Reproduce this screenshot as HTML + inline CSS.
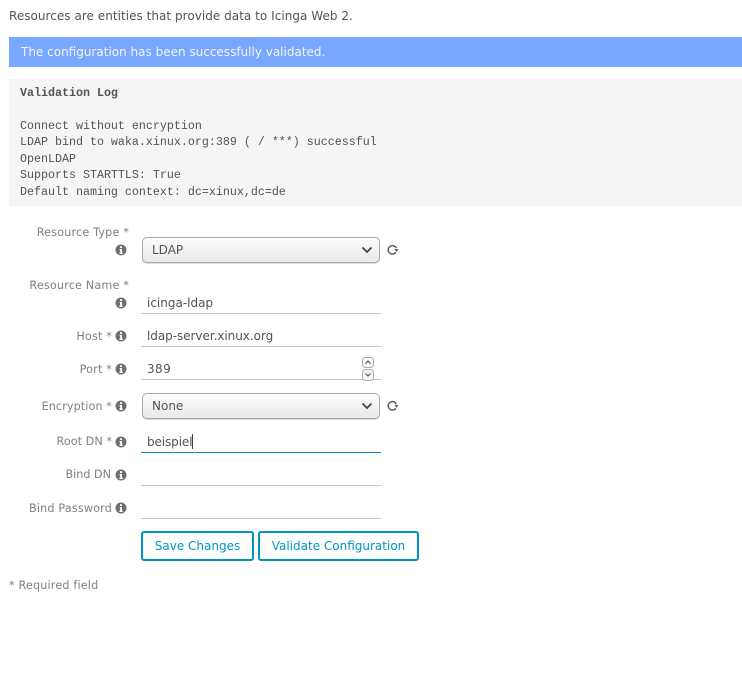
<!DOCTYPE html>
<html>
<head>
<meta charset="utf-8">
<style>
html,body{margin:0;padding:0;width:742px;height:694px;background:#fff;overflow:hidden}
body{position:relative;font-family:"DejaVu Sans",sans-serif;color:#535353}
.t{position:absolute;white-space:nowrap;line-height:16px}
.l{position:absolute;white-space:nowrap;line-height:14px;font-size:11.2px;color:#7f7f7f;letter-spacing:.17px;text-align:right}
.v{font-size:12px;color:#535353}
.b{position:absolute;left:141px;width:240px;height:1px;background:#c8c8c8}
.sel{position:absolute;left:142px;width:236px;height:24px;border:1px solid #aaa;border-radius:5px;background:linear-gradient(#fcfcfc,#e9e9e9);box-shadow:0 1px 0 #ddd}
.btn{position:absolute;top:531px;height:26px;border:2px solid #0095bf;border-radius:3px;color:#0095bf;font-size:12px;line-height:26px;text-align:center;background:#fff}
svg{position:absolute;display:block}
pre{margin:0;position:absolute;left:20px;font:11.67px/16.5px "Liberation Mono",monospace;color:#535353}
</style>
</head>
<body>
<div class="t" style="left:9px;top:8px;font-size:12px;letter-spacing:.035px">Resources are entities that provide data to Icinga Web 2.</div>
<div style="position:absolute;left:9px;top:37px;width:733px;height:30px;background:#77a7ff"></div>
<div class="t" style="left:21px;top:44px;font-size:12px;color:#f2f6ff">The configuration has been successfully validated.</div>
<div style="position:absolute;left:9px;top:79px;width:733px;height:127px;background:#f5f5f5"></div>
<pre style="top:84.5px"><b>Validation Log</b>

Connect without encryption
LDAP bind to waka.xinux.org:389 ( / ***) successful
OpenLDAP
Supports STARTTLS: True
Default naming context: dc=xinux,dc=de</pre>

<div class="l" style="right:613px;top:226px">Resource Type *</div>
<svg style="left:115px;top:244px" width="12" height="12" viewBox="0 0 12 12"><circle cx="6" cy="6" r="5.5" fill="#6f6f6f"/><path d="M5 2.3h2v1.7H5zM4.6 5h2.4v3.6h.7V10H4.4V8.6h.8V6.3h-.6z" fill="#fff"/></svg>
<div class="sel" style="top:237px"></div>
<div class="t v" style="left:152px;top:242px">LDAP</div>
<svg style="left:361px;top:246px" width="12" height="8" viewBox="0 0 12 8"><path d="M1.500 1.500L6 6l4.500-4.500" fill="none" stroke="#444" stroke-width="1.800"/></svg>
<svg style="left:386px;top:243px" width="13" height="13" viewBox="0 0 13 13"><path d="M9.800 9.300A4.200 4.200 0 1 1 10.300 5.200" fill="none" stroke="#555" stroke-width="1.400"/><path d="M8.300 6.100h4.300l-2.100 2.600z" fill="#555"/></svg>

<div class="l" style="right:613px;top:279px">Resource Name *</div>
<svg style="left:115px;top:297px" width="12" height="12" viewBox="0 0 12 12"><circle cx="6" cy="6" r="5.5" fill="#6f6f6f"/><path d="M5 2.3h2v1.7H5zM4.6 5h2.4v3.6h.7V10H4.4V8.6h.8V6.3h-.6z" fill="#fff"/></svg>
<div class="t v" style="left:147px;top:295px">icinga-ldap</div>
<div class="b" style="top:313px"></div>

<div class="l" style="right:630px;top:330px">Host *</div>
<svg style="left:115px;top:330px" width="12" height="12" viewBox="0 0 12 12"><circle cx="6" cy="6" r="5.5" fill="#6f6f6f"/><path d="M5 2.3h2v1.7H5zM4.6 5h2.4v3.6h.7V10H4.4V8.6h.8V6.3h-.6z" fill="#fff"/></svg>
<div class="t v" style="left:147px;top:328px;letter-spacing:-.05px">ldap-server.xinux.org</div>
<div class="b" style="top:346px"></div>

<div class="l" style="right:630px;top:363px">Port *</div>
<svg style="left:115px;top:363px" width="12" height="12" viewBox="0 0 12 12"><circle cx="6" cy="6" r="5.5" fill="#6f6f6f"/><path d="M5 2.3h2v1.7H5zM4.6 5h2.4v3.6h.7V10H4.4V8.6h.8V6.3h-.6z" fill="#fff"/></svg>
<div class="t v" style="left:147px;top:361px;letter-spacing:.4px">389</div>
<div class="b" style="top:379px"></div>
<svg style="left:361px;top:356px" width="14" height="26" viewBox="0 0 14 26"><rect x="1.500" y="1.500" width="11" height="10" rx="3" fill="#f8f8f8" stroke="#aaa"/><rect x="1.500" y="13.500" width="11" height="11" rx="3" fill="#f8f8f8" stroke="#aaa"/><path d="M4.500 7.500L7 5l2.500 2.500M4.500 17.500L7 20l2.500-2.500" fill="none" stroke="#555" stroke-width="1.200"/></svg>

<div class="l" style="right:630px;top:400px;letter-spacing:.1px">Encryption *</div>
<svg style="left:115px;top:400px" width="12" height="12" viewBox="0 0 12 12"><circle cx="6" cy="6" r="5.5" fill="#6f6f6f"/><path d="M5 2.3h2v1.7H5zM4.6 5h2.4v3.6h.7V10H4.4V8.6h.8V6.3h-.6z" fill="#fff"/></svg>
<div class="sel" style="top:393px"></div>
<div class="t v" style="left:152px;top:398px">None</div>
<svg style="left:361px;top:402px" width="12" height="8" viewBox="0 0 12 8"><path d="M1.500 1.500L6 6l4.500-4.500" fill="none" stroke="#444" stroke-width="1.800"/></svg>
<svg style="left:386px;top:399px" width="13" height="13" viewBox="0 0 13 13"><path d="M9.800 9.300A4.200 4.200 0 1 1 10.300 5.200" fill="none" stroke="#555" stroke-width="1.400"/><path d="M8.300 6.100h4.300l-2.100 2.600z" fill="#555"/></svg>

<div class="l" style="right:630px;top:435px;letter-spacing:.05px">Root DN *</div>
<svg style="left:115px;top:436px" width="12" height="12" viewBox="0 0 12 12"><circle cx="6" cy="6" r="5.5" fill="#6f6f6f"/><path d="M5 2.3h2v1.7H5zM4.6 5h2.4v3.6h.7V10H4.4V8.6h.8V6.3h-.6z" fill="#fff"/></svg>
<div class="t v" style="left:147px;top:434px;letter-spacing:-.1px">beispiel</div>
<div style="position:absolute;left:192px;top:434px;width:1px;height:15px;background:#444"></div>
<div class="b" style="top:452px;background:#0095bf"></div>

<div class="l" style="right:631px;top:468px;letter-spacing:0">Bind DN</div>
<svg style="left:115px;top:469px" width="12" height="12" viewBox="0 0 12 12"><circle cx="6" cy="6" r="5.5" fill="#6f6f6f"/><path d="M5 2.3h2v1.7H5zM4.6 5h2.4v3.6h.7V10H4.4V8.6h.8V6.3h-.6z" fill="#fff"/></svg>
<div class="b" style="top:485px"></div>

<div class="l" style="right:630px;top:502px">Bind Password</div>
<svg style="left:115px;top:502px" width="12" height="12" viewBox="0 0 12 12"><circle cx="6" cy="6" r="5.5" fill="#6f6f6f"/><path d="M5 2.3h2v1.7H5zM4.6 5h2.4v3.6h.7V10H4.4V8.6h.8V6.3h-.6z" fill="#fff"/></svg>
<div class="b" style="top:518px"></div>

<div class="btn" style="left:141px;width:109px">Save Changes</div>
<div class="btn" style="left:258px;width:157px">Validate Configuration</div>

<div class="l" style="left:9px;top:579px">* Required field</div>
</body>
</html>
